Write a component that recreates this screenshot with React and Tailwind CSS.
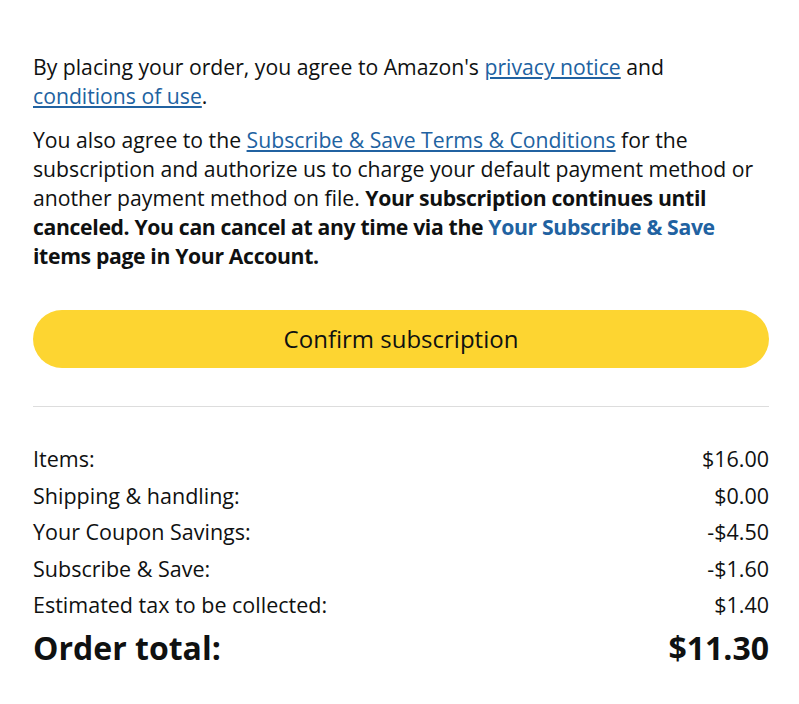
export default function App() {
  const rows = [
    ['Items:', '$16.00'],
    ['Shipping & handling:', '$0.00'],
    ['Your Coupon Savings:', '-$4.50'],
    ['Subscribe & Save:', '-$1.60'],
    ['Estimated tax to be collected:', '$1.40'],
  ]

  return (
    <div
      className="min-h-[704px] bg-white pl-[33px] pr-[30px] pt-[52px] text-[#0f1111]"
      style={{ fontFamily: '"Open Sans", "Noto Sans", sans-serif' }}
    >
      {/* Agreement text */}
      <p className="text-[21.2px] leading-[29px]">
        By placing your order, you agree to Amazon's{' '}
        <a className="text-[#2162a1] underline">privacy notice</a> and{' '}
        <a className="text-[#2162a1] underline">conditions of use</a>.
      </p>
      <p className="mt-[15px] text-[21.2px] leading-[29px]">
        You also agree to the{' '}
        <a className="text-[#2162a1] underline">Subscribe &amp; Save Terms &amp; Conditions</a>{' '}
        for the subscription and authorize us to charge your default payment method or another
        payment method on file.{' '}
        <span className="font-bold tracking-[-0.35px]">
          Your subscription continues until canceled. You can cancel at any time via the{' '}
          <a className="text-[#2162a1]">Your Subscribe &amp; Save</a> items page in Your Account.
        </span>
      </p>

      {/* Confirm button */}
      <button className="mt-[40px] flex h-[58px] w-full items-center justify-center rounded-full bg-[#fdd531] text-[24px] text-[#0f1111]">
        Confirm subscription
      </button>

      <div className="mt-[38px] h-px bg-[#dddddd]" />

      {/* Order summary */}
      <div className="mt-[34px] flex flex-col">
        {rows.map(([label, value]) => (
          <div key={label} className="flex h-[36.5px] items-center justify-between text-[21.5px]">
            <span>{label}</span>
            <span>{value}</span>
          </div>
        ))}
        <div className="flex items-center justify-between text-[32px] font-bold">
          <span>Order total:</span>
          <span>$11.30</span>
        </div>
      </div>
    </div>
  )
}
